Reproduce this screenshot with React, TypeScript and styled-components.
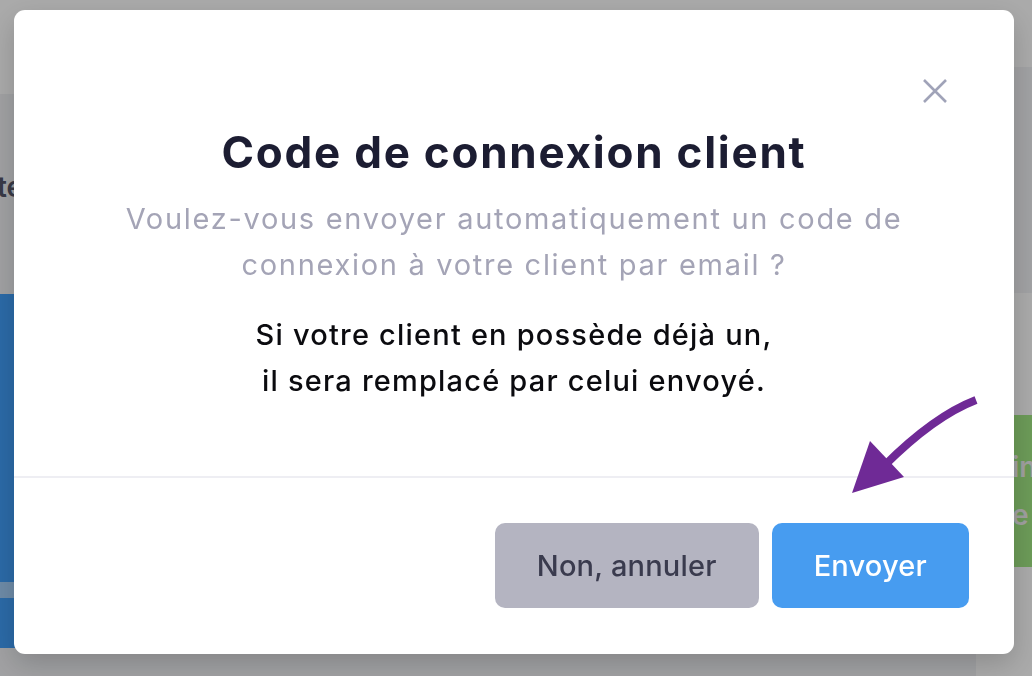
import styled, { createGlobalStyle } from "styled-components";

const GlobalStyle = createGlobalStyle`
  html, body {
    margin: 0;
    padding: 0;
    width: 1032px;
    height: 676px;
    overflow: hidden;
    font-family: "Inter", "Noto Sans", sans-serif;
  }
`;

const Page = styled.div`
  width: 1032px;
  height: 676px;
  background: #f1f2f5;
  display: flex;
`;

const MainArea = styled.div`
  flex: 1;
  display: flex;
  flex-direction: column;
`;

const Header = styled.header`
  height: 94px;
  background: #ffffff;
  flex-shrink: 0;
`;

const Content = styled.main`
  flex: 1;
  display: flex;
`;

const LeftColumn = styled.div`
  width: 200px;
  display: flex;
  flex-direction: column;
  padding-top: 76px;
`;

const PageTitle = styled.div`
  font-size: 28px;
  font-weight: 600;
  color: #55566a;
  margin-left: -3px;
  height: 124px;
`;

const Card = styled.div<{ $tone: string; $height: number }>`
  background: ${({ $tone }) => $tone};
  height: ${({ $height }) => $height}px;
`;

const CardGap = styled.div`
  height: 16px;
  background: #a5d0fa;
`;

const Sidebar = styled.aside`
  width: 56px;
  background: #ffffff;
  display: flex;
  flex-direction: column;
  padding-top: 67px;
`;

const SidebarBlock = styled.div`
  height: 226px;
  background: #f2f3f6;
  margin-bottom: 122px;
`;

const GreenCard = styled.div`
  height: 152px;
  background: #a2e884;
  color: #f0f0f0;
  font-size: 28px;
  font-weight: 600;
  padding: 28px 0 0 36px;
  box-sizing: border-box;
  line-height: 48px;
  white-space: nowrap;
  overflow: hidden;
`;

const Overlay = styled.div`
  position: fixed;
  inset: 0;
  background: rgba(0, 0, 0, 0.335);
  display: flex;
  align-items: flex-start;
  padding: 10px 0 0 14px;
`;

const Modal = styled.section`
  position: relative;
  width: 1000px;
  height: 644px;
  background: #ffffff;
  border-radius: 11px;
  box-shadow: 0 10px 28px rgba(0, 0, 0, 0.18);
  display: flex;
  flex-direction: column;
`;

const CloseButton = styled.button`
  position: absolute;
  top: 69px;
  right: 67px;
  width: 24px;
  height: 24px;
  padding: 0;
  border: none;
  background: transparent;
  display: flex;
  align-items: center;
  justify-content: center;
  cursor: pointer;
`;

const Body = styled.div`
  padding: 118px 40px 72px;
  text-align: center;
  display: flex;
  flex-direction: column;
  align-items: center;
`;

const Title = styled.h2`
  margin: 0;
  font-size: 44px;
  line-height: 48px;
  font-weight: 700;
  color: #1c1d32;
  letter-spacing: 1.75px;
`;

const Lead = styled.p`
  margin: 20px 0 0;
  font-size: 29px;
  line-height: 46px;
  color: #a4a4b6;
  letter-spacing: 1.7px;
`;

const Note = styled.p`
  margin: 24px 0 0;
  font-size: 29px;
  line-height: 46px;
  font-weight: 500;
  color: #0b0b0f;
  letter-spacing: 1.2px;
`;

const Divider = styled.hr`
  margin: 0;
  border: none;
  height: 2px;
  background: #eeeef3;
`;

const Footer = styled.div`
  display: flex;
  justify-content: flex-end;
  gap: 13px;
  padding: 45px 45px 0;
`;

const Button = styled.button<{ $primary?: boolean }>`
  height: 85px;
  padding: 0 42px;
  border: none;
  border-radius: 10px;
  font-family: inherit;
  font-size: 29px;
  font-weight: 500;
  letter-spacing: 0.2px;
  background: ${({ $primary }) => ($primary ? "#479cf0" : "#b4b4c1")};
  color: ${({ $primary }) => ($primary ? "#ffffff" : "#3a3b4e")};
  cursor: pointer;
`;

const Pointer = styled.svg`
  position: absolute;
  left: 830px;
  top: 378px;
  overflow: visible;
`;

const CloseIcon = () => (
  <svg width="24" height="24" viewBox="0 0 24 24">
    <path d="M1 1 L23 23 M23 1 L1 23" stroke="#a0a3b8" strokeWidth="2.6" />
  </svg>
);

// hint arrow drawn over the footer, page coords shifted by (844, 388)
const HintArrow = () => (
  <Pointer width="150" height="120" viewBox="0 0 150 120">
    <path
      d="M132 12 C 106 22 74 44 40 78"
      stroke="#6f2a96"
      strokeWidth="8"
      fill="none"
    />
    <polygon points="8,105 26,53 60,89" fill="#6f2a96" />
  </Pointer>
);

export default function App() {
  return (
    <>
      <GlobalStyle />
      <Page>
        <MainArea>
          <Header />
          <Content>
            <LeftColumn>
              <PageTitle>te</PageTitle>
              <Card $tone="#419ffa" $height={288} />
              <CardGap />
              <Card $tone="#419ffa" $height={50} />
            </LeftColumn>
          </Content>
        </MainArea>
        <Sidebar>
          <SidebarBlock />
          <GreenCard>
            in
            <br />e
          </GreenCard>
        </Sidebar>
      </Page>
      <Overlay>
        <Modal>
          <CloseButton aria-label="Fermer">
            <CloseIcon />
          </CloseButton>
          <Body>
            <Title>Code de connexion client</Title>
            <Lead>
              Voulez-vous envoyer automatiquement un code de
              <br />
              connexion à votre client par email ?
            </Lead>
            <Note>
              Si votre client en possède déjà un,
              <br />
              il sera remplacé par celui envoyé.
            </Note>
          </Body>
          <Divider />
          <Footer>
            <Button>Non, annuler</Button>
            <Button $primary>Envoyer</Button>
          </Footer>
          <HintArrow />
        </Modal>
      </Overlay>
    </>
  );
}
